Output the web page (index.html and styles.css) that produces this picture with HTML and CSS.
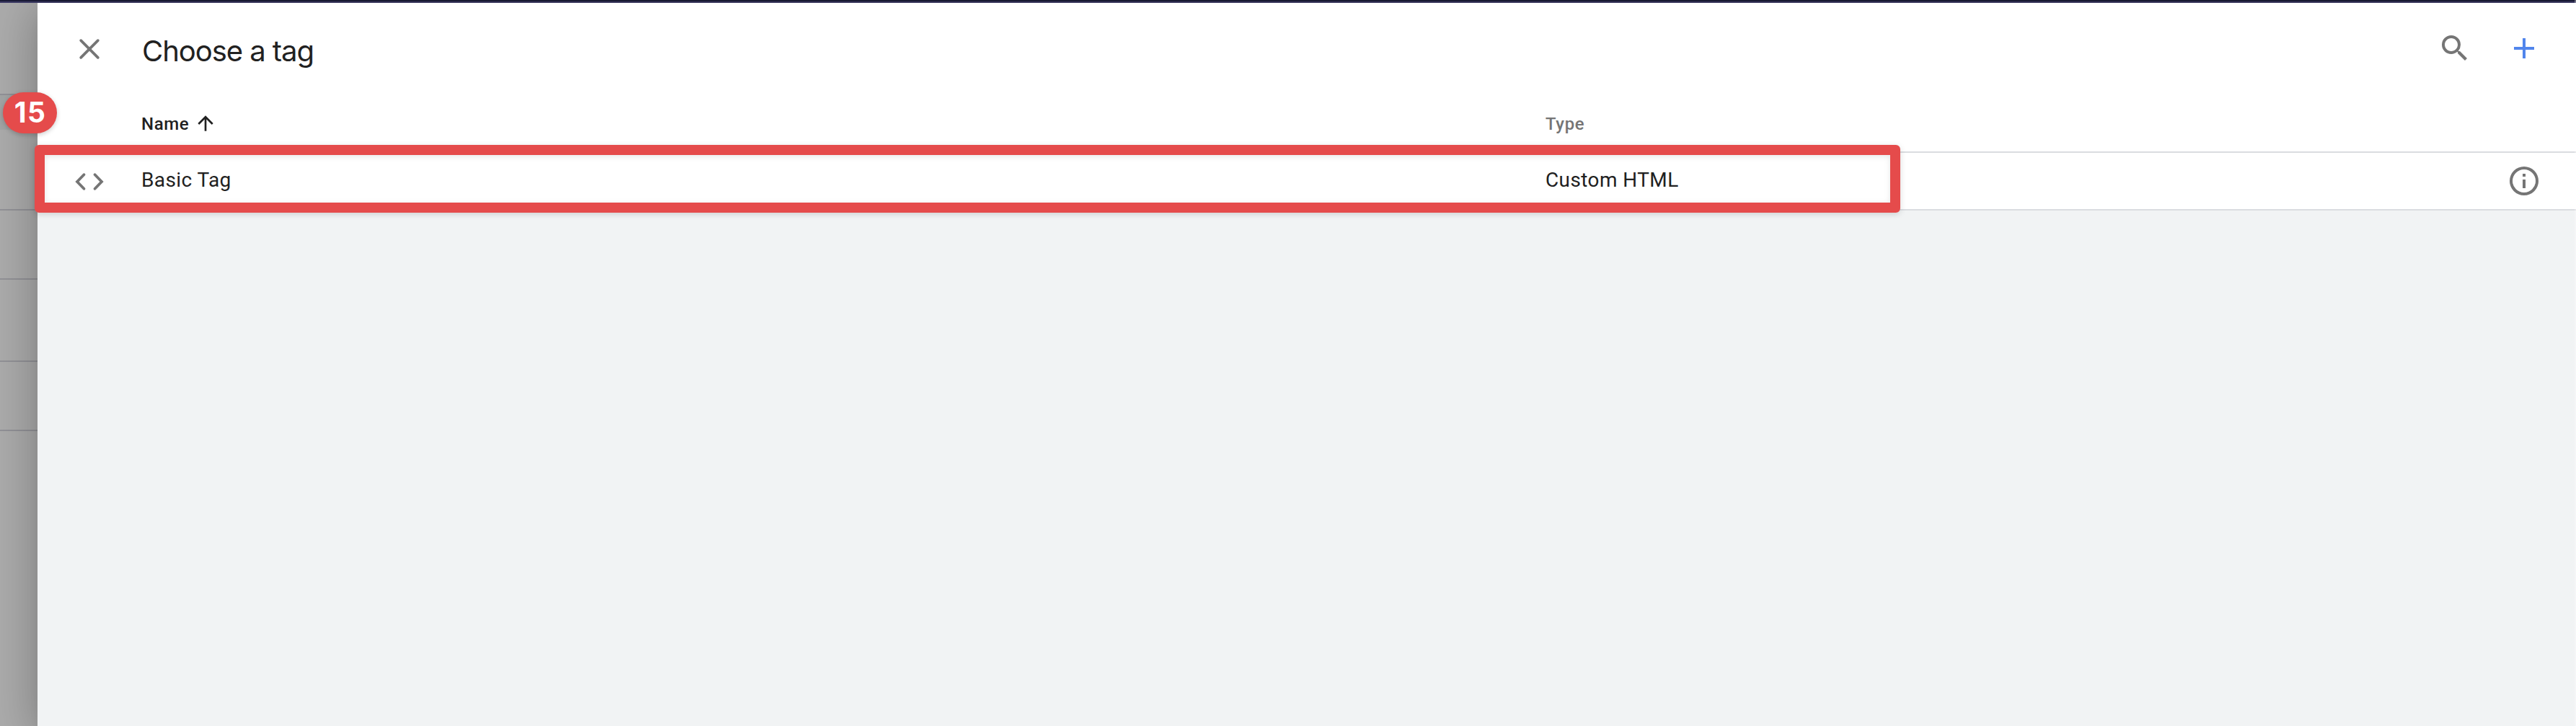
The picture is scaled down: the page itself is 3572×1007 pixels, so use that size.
FILE: index.html
```html
<!DOCTYPE html>
<html lang="en">
<head>
<meta charset="utf-8">
<title>Choose a tag</title>
<link rel="stylesheet" href="styles.css">
</head>
<body>
<div class="topbar"></div>
<div class="workspace">
  <aside class="backdrop">
    <div class="strip strip-top"></div>
    <div class="strip strip-head"></div>
    <div class="strip strip-a"></div>
    <div class="strip strip-b"></div>
    <div class="strip strip-c"></div>
    <div class="strip strip-b"></div>
  </aside>
  <main class="panel">
    <header class="toolbar">
      <svg class="icon close" viewBox="0 0 24 24"><path d="M6.1 6.1L17.9 17.9M17.9 6.1L6.1 17.9"/></svg>
      <h1 class="title">Choose a tag</h1>
      <svg class="icon search" viewBox="0 0 24 24"><path d="M15.5 14h-.79l-.28-.27A6.471 6.471 0 0 0 16 9.5 6.5 6.5 0 1 0 9.5 16c1.61 0 3.09-.59 4.23-1.57l.27.28v.79l5 4.99L20.49 19l-4.99-5zm-6 0C7.01 14 5 11.99 5 9.5S7.01 5 9.5 5 14 7.01 14 9.5 11.99 14 9.5 14z"/></svg>
      <svg class="icon add" viewBox="0 0 24 24"><path d="M19 13h-6v6h-2v-6H5v-2h6V5h2v6h6v2z"/></svg>
    </header>
    <div class="columns head">
      <span class="name">Name<svg class="arrow" viewBox="0 0 24 24"><path d="M4 12l1.41 1.41L11 7.83V20h2V7.83l5.58 5.59L20 12l-8-8-8 8z"/></svg></span>
      <span class="type">Type</span>
    </div>
    <div class="columns row">
      <svg class="icon code" viewBox="0 0 24 24"><path d="M8.2 7.1L3.5 12l4.7 4.9M15.8 7.1l4.7 4.9-4.7 4.9"/></svg>
      <span class="name">Basic Tag</span>
      <span class="type">Custom HTML</span>
      <svg class="icon info" viewBox="0 0 24 24"><path d="M11 7h2v2h-2zm0 4h2v6h-2zm1-9a10 10 0 1 0 0 20 10 10 0 0 0 0-20zm0 18a8 8 0 1 1 0-16 8 8 0 0 1 0 16z"/></svg>
    </div>
  </main>
</div>
<div class="edge"></div>
<div class="highlight"></div>
<div class="badge">15</div>
</body>
</html>
```
FILE: styles.css
```css
* { box-sizing: border-box; }

body {
  margin: 0;
  height: 1007px;
  position: relative;
  overflow: hidden;
  display: flex;
  flex-direction: column;
  background: #acacac;
  color: #212121;
  font-family: Roboto, "Liberation Sans", sans-serif;
}

.topbar {
  height: 4px;
  flex: none;
  background: #1b1c38;
  border-bottom: 2px solid #3d3b66;
}

.workspace {
  flex: 1;
  display: flex;
}

/* Dimmed page behind the sliding panel */
.backdrop {
  width: 52px;
  background: #acacac;
}

.strip { border-bottom: 2px solid #929297; }
.strip-top { height: 128px; }
.strip-head {
  height: 48px;
  border-bottom: 0;
  background: #a3a5a5;
}
.strip-a { height: 112px; }
.strip-b { height: 96px; }
.strip-c { height: 114px; }

.panel {
  flex: 1;
  background: #f1f3f4;
  box-shadow: 0 16px 20px -10px rgba(0, 0, 0, .1), 0 10px 60px 6px rgba(0, 0, 0, .26);
}

.toolbar {
  height: 126px;
  display: flex;
  align-items: flex-start;
  padding: 39px 48px 0 48px;
  background: #fff;
}

.icon {
  width: 48px;
  height: 48px;
  flex: none;
  fill: #757575;
}

.close, .code {
  fill: none;
  stroke: #757575;
  stroke-width: 1.9;
  stroke-linecap: round;
}
.close { margin-top: 1px; }

.title {
  margin: 0 0 0 49px;
  flex: 1;
  font: 400 40px/56px Inter, "Open Sans", sans-serif;
  letter-spacing: -1.05px;
}

.search { margin-right: 48px; }
.add { fill: #5185ec; }

.columns {
  display: grid;
  grid-template-columns: 144px 1947px 1fr 48px;
  padding-right: 48px;
  background: #fff;
  border-bottom: 2px solid #dadce0;
}

.columns .name { grid-column: 2; }
.columns .type { grid-column: 3; }

.head {
  height: 82px;
  font-size: 24px;
  font-weight: 500;
  line-height: 28px;
  letter-spacing: .6px;
  padding-top: 28px;
}
.head .name { display: flex; }
.head .type { color: #757575; }

.arrow {
  width: 32px;
  height: 32px;
  margin: -3px 0 0 7px;
  fill: #212121;
}

.row {
  height: 80px;
  align-items: start;
  padding-top: 15px;
  font-size: 28px;
  line-height: 46px;
  letter-spacing: .4px;
}
.row .code { margin: 1px 0 0 48px; }

.edge {
  position: absolute;
  top: 0;
  right: 0;
  width: 2px;
  height: 100%;
  background: rgba(255, 255, 255, .3);
}

/* Annotation layer over the page */
.highlight {
  position: absolute;
  left: 48px;
  top: 200.5px;
  width: 2587px;
  height: 94.5px;
  border: 14px solid #e54b4b;
  border-radius: 6px;
  box-shadow: 0 2px 8px rgba(0, 0, 0, .15), inset 0 2px 8px rgba(0, 0, 0, .1);
}

.badge {
  position: absolute;
  left: 4px;
  top: 128px;
  width: 75px;
  height: 57px;
  border-radius: 29px;
  background: #e54b4b;
  color: #fff;
  font: 700 39px/56px Inter, sans-serif;
  letter-spacing: 1.5px;
  text-indent: 1px;
  text-align: center;
  box-shadow: 0 2px 6px rgba(0, 0, 0, .2);
}
```
